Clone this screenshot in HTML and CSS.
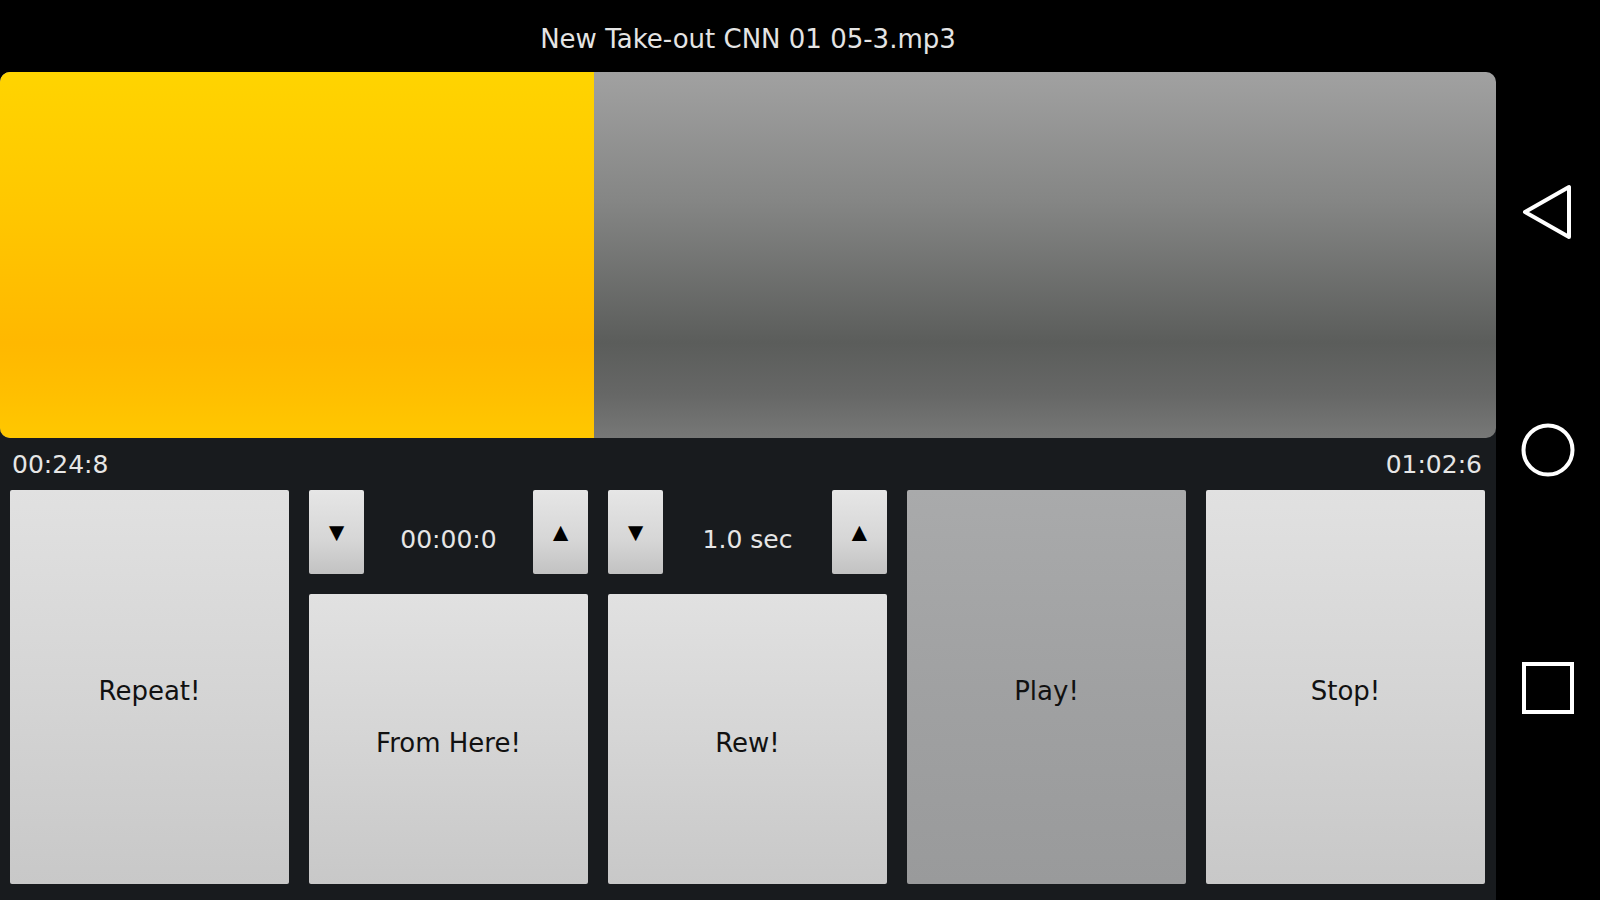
FILE: index.html
```html
<!DOCTYPE html>
<html lang='en'>
    <head>
        <meta charset="utf-8">
        <title>Repeat Player</title>
        <link rel="stylesheet" href="styles.css">
    </head>
    <body>
        <div class="screen">
            <div class="app">
                <div class="title">New Take-out CNN 01 05-3.mp3</div>
                <div class="progress">
                    <!-- played part: 24.8 / 62.6 sec -->
                    <div class="played" style="width:39.7%"></div>
                </div>
                <div class="times">
                    <span>00:24:8</span>
                    <span>01:02:6</span>
                </div>
                <div class="controls">
                    <button class="pad">Repeat!</button>
                    <div class="group">
                        <div class="stepper">
                            <button class="step">&#9660;</button>
                            <span class="value">00:00:0</span>
                            <button class="step">&#9650;</button>
                        </div>
                        <button class="pad">From Here!</button>
                    </div>
                    <div class="group">
                        <div class="stepper">
                            <button class="step">&#9660;</button>
                            <span class="value">1.0 sec</span>
                            <button class="step">&#9650;</button>
                        </div>
                        <button class="pad">Rew!</button>
                    </div>
                    <button class="pad active">Play!</button>
                    <button class="pad">Stop!</button>
                </div>
            </div>
            <div class="navbar">
                <svg width="56" height="56" viewBox="0 0 56 56">
                    <path d="M5 28 L49 3 L49 53 Z" fill="none" stroke="#fff" stroke-width="4" stroke-linejoin="round"/>
                </svg>
                <svg width="56" height="56" viewBox="0 0 56 56">
                    <circle cx="28" cy="28" r="24.5" fill="none" stroke="#fff" stroke-width="4"/>
                </svg>
                <svg width="56" height="56" viewBox="0 0 56 56">
                    <rect x="4" y="4" width="48" height="48" fill="none" stroke="#fff" stroke-width="4"/>
                </svg>
            </div>
        </div>
    </body>
</html>
```

FILE: styles.css
```css
body{
    margin:0;
    background-color:#000;
    font-family:"DejaVu Sans",sans-serif;
}
.screen{
    display:flex;
    width:1600px;
    height:900px;
    overflow:hidden;
}
.app{
    width:1496px;
    display:flex;
    flex-direction:column;
    background-color:#181b1e;
}
.title{
    height:72px;
    background-color:#000;
    color:#e4e4e4;
    font-size:26px;
    text-align:center;
    line-height:78px;
}
.progress{
    height:366px;
    display:flex;
    border-radius:10px;
    overflow:hidden;
    background:linear-gradient(to bottom,#a1a1a1 0%,#858685 35%,#5b5d5b 74%,#666766 88%,#777877 100%);
    box-shadow:0 -10px 0 #000;
}
.played{
    height:100%;
    background:linear-gradient(to bottom,#ffd400 0%,#ffc800 35%,#ffb800 74%,#ffbf00 88%,#ffc800 100%);
}
.times{
    height:52px;
    display:flex;
    justify-content:space-between;
    align-items:center;
    padding:0 14px 0 12px;
    color:#e6e6e6;
    font-size:25px;
}
.controls{
    display:grid;
    grid-template-columns:repeat(5,1fr);
    column-gap:20px;
    padding:0 11px 16px 10px;
    flex:1;
}
.pad{
    border:none;
    border-radius:2px;
    background:linear-gradient(to bottom,#e1e1e1 0%,#d5d5d5 50%,#c8c8c8 100%);
    font-family:inherit;
    font-size:26px;
    color:#111;
    padding:8px 0 0 0;
    cursor:pointer;
}
.pad.active{
    background:linear-gradient(to bottom,#a9aaab 0%,#a0a1a2 50%,#999a9b 100%);
}
.group{
    display:flex;
    flex-direction:column;
    gap:20px;
}
.group .pad{
    flex:1;
}
.stepper{
    height:84px;
    display:flex;
    justify-content:space-between;
    align-items:center;
}
.step{
    width:55px;
    height:84px;
    border:none;
    border-radius:2px;
    background:linear-gradient(to bottom,#e6e6e6 0%,#d6d6d6 60%,#c2c2c2 100%);
    font-size:26px;
    color:#000;
    padding:0;
    cursor:pointer;
}
.value{
    color:#e6e6e6;
    font-size:25px;
    padding-top:14px;
}
.navbar{
    width:104px;
    display:flex;
    flex-direction:column;
    align-items:center;
    justify-content:center;
    gap:182px;
    background-color:#000;
}
```
